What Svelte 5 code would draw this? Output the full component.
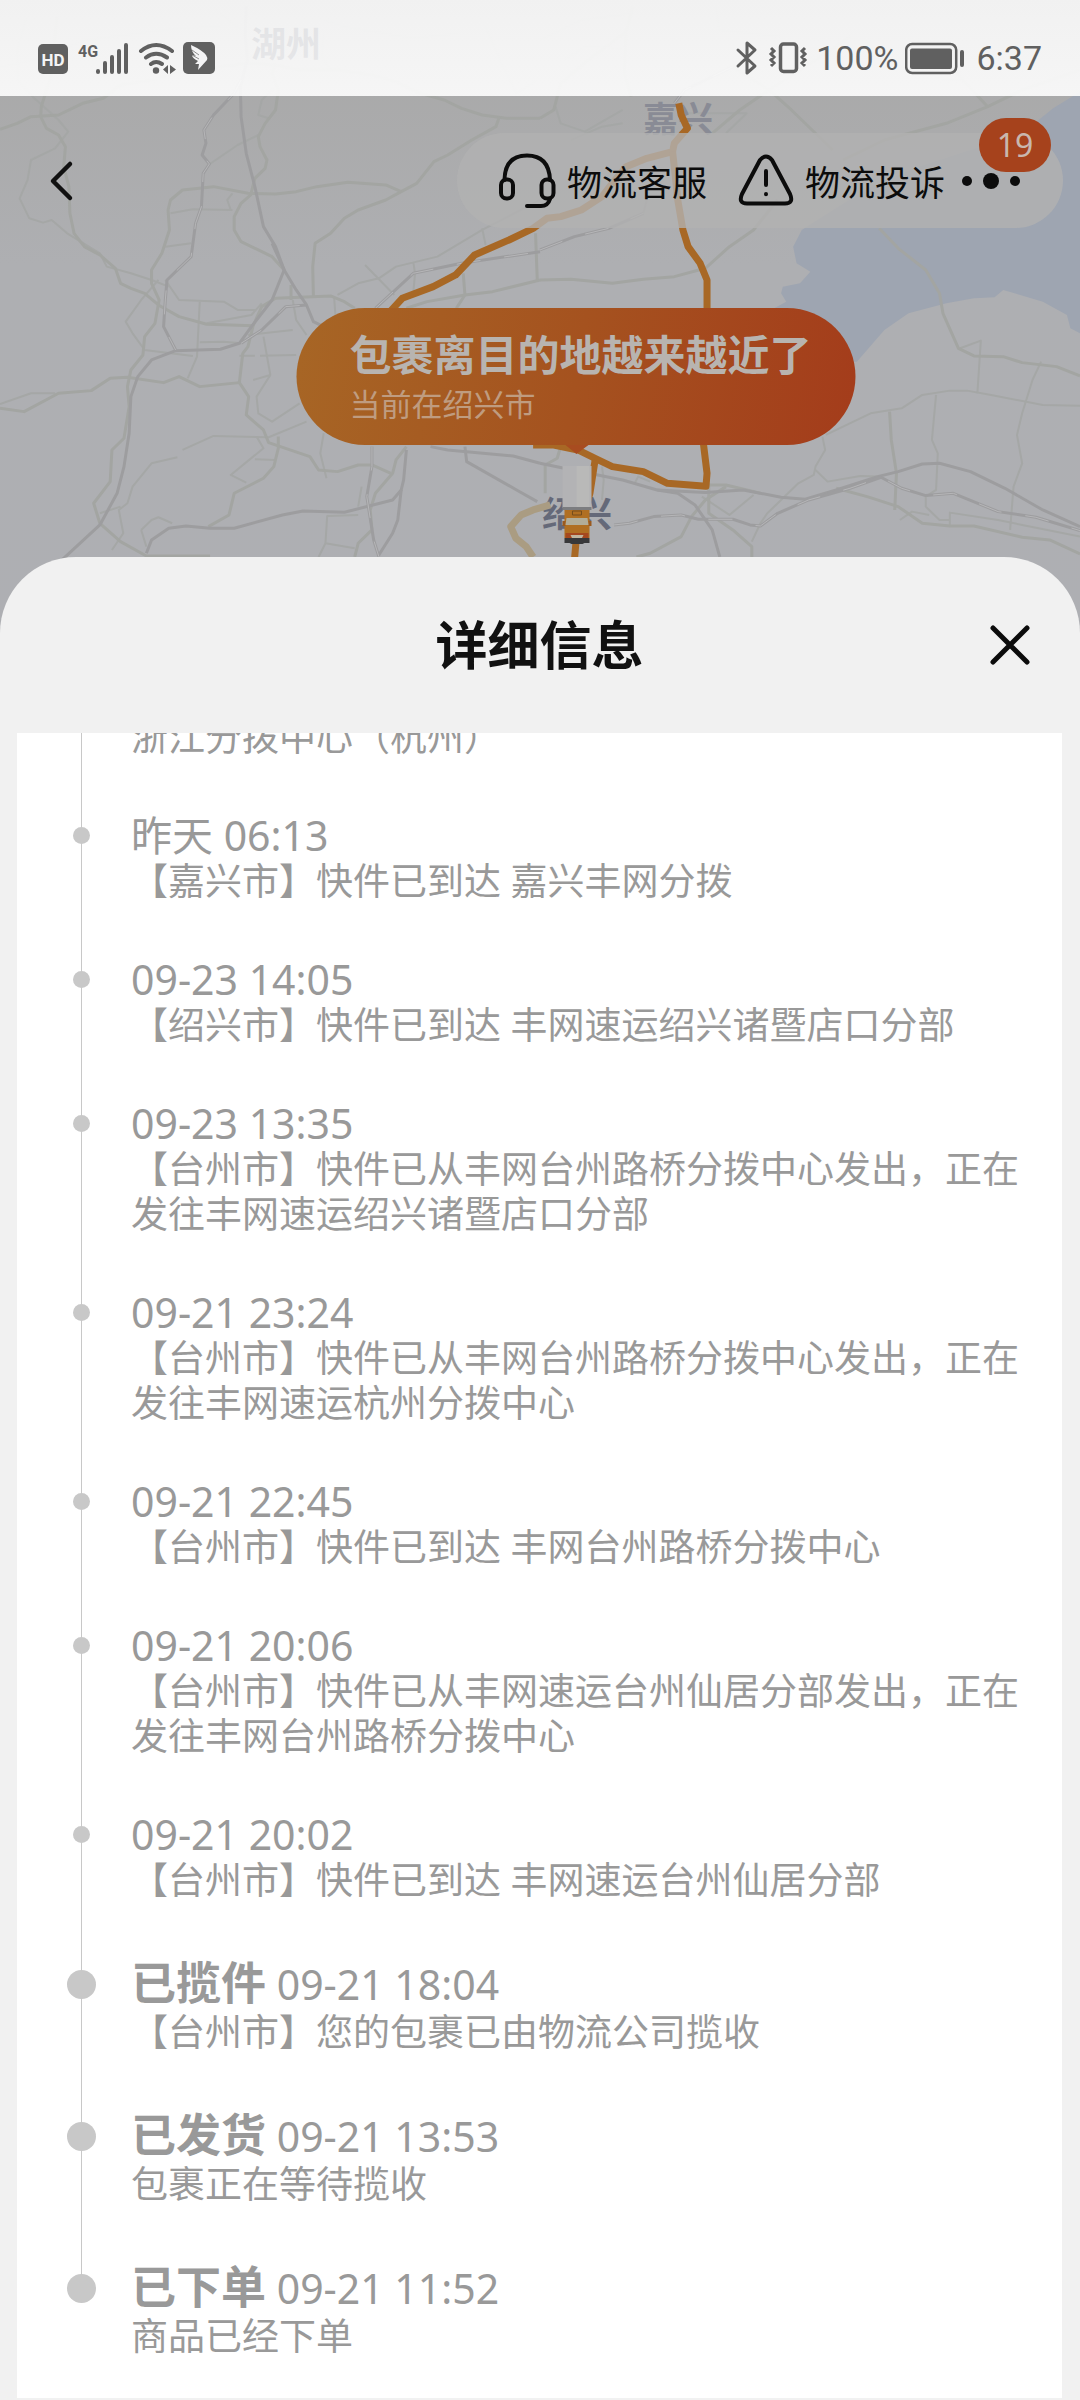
<script>
	const events = [
		{ time: '昨天 06:13', text: '【嘉兴市】快件已到达 嘉兴丰网分拨' },
		{ time: '09-23 14:05', text: '【绍兴市】快件已到达 丰网速运绍兴诸暨店口分部' },
		{ time: '09-23 13:35', text: '【台州市】快件已从丰网台州路桥分拨中心发出，正在发往丰网速运绍兴诸暨店口分部' },
		{ time: '09-21 23:24', text: '【台州市】快件已从丰网台州路桥分拨中心发出，正在发往丰网速运杭州分拨中心' },
		{ time: '09-21 22:45', text: '【台州市】快件已到达 丰网台州路桥分拨中心' },
		{ time: '09-21 20:06', text: '【台州市】快件已从丰网速运台州仙居分部发出，正在发往丰网台州路桥分拨中心' },
		{ time: '09-21 20:02', text: '【台州市】快件已到达 丰网速运台州仙居分部' },
		{ status: '已揽件', time: '09-21 18:04', text: '【台州市】您的包裹已由物流公司揽收' },
		{ status: '已发货', time: '09-21 13:53', text: '包裹正在等待揽收' },
		{ status: '已下单', time: '09-21 11:52', text: '商品已经下单' }
	];

	// map roads, west and east tile
	const west = {
		major: [
			'M0 388 50 370 90 350 170 345 240 310 300 295 350 255 440 240 520 215 640 200 720 190 800 195 870 210 980 210 1080 225 1150 245 1220 280 1290 300 1340 325 1400 345 1470 355 1568 355',
			'M165 50 150 220 120 320 118 350 135 385 170 405 190 440 185 500 200 560 203 640 215 700 245 740 290 765 335 805 350 850 380 865 420 880 460 915 520 950 600 973 735 977',
			'M800 190 790 220 808 270 800 330 770 370 750 410 755 440 775 480 770 505 740 535 728 585 700 610 680 650 680 690 700 725 750 750 790 770 825 810',
			'M1450 350 1440 380 1370 420 1300 465 1260 485 1210 550 1165 575 1120 600 1040 630 1000 655 960 700 915 730 908 800 910 890',
			'M1165 575 1120 555 1010 547 920 560 860 575 800 582 720 580 620 560 530 570 495 600 488 630 492 690 470 760 440 810 440 850 462 900 450 970 420 1010 415 1065 380 1110 370 1160 375 1220 360 1315 325 1350 320 1445 272 1510 290 1570 350 1625 425 1668 610 1668',
			'M0 1225 70 1235 170 1180 265 1172 320 1135 370 1132 475 1148 520 1130 580 1160 695 1148 722 1190 715 1245 765 1290 780 1328 900 1370 925 1410 980 1415 1040 1395 1080 1395 1135 1420',
			'M808 1310 808 1345 795 1400 765 1435 680 1480 665 1545 605 1580',
			'M735 977 720 1040 705 1060 695 1148',
			'M735 977 760 920 800 895 960 888 1000 905 1030 925',
			'M1180 925 1240 905 1350 885 1430 875 1568 840',
			'M1345 820 1350 885 1325 925M1555 700 1560 840M845 855 845 900',
			'M1180 1340 1150 1380 1140 1420 1090 1480 1075 1530 1080 1590 1040 1630 1030 1671'
		],
		highway: [
			'M715 20 712 100 718 180 698 260 700 350 715 460 740 560 765 680 800 740 825 810 860 870 890 915 910 965 950 985',
			'M790 730 825 810 790 900 730 980 695 1030 640 1048 510 1052 440 1080 400 1130 380 1190 375 1300 360 1400 340 1480 290 1575 180 1680',
			'M425 1660 440 1620 490 1585 540 1578 610 1585 680 1585 820 1545 880 1533 1000 1537 1140 1500 1165 1470 1172 1440 1180 1350',
			'M1165 1470 1155 1560 1140 1600 1100 1665',
			'M1250 1340 1300 1350 1490 1368 1568 1390',
			'M1350 1340 1355 1385 1500 1470 1560 1505'
		],
		minor: [
			'M75 60 50 150 52 240 95 290 170 360 198 395 160 445 90 480 80 540 57 595 85 655 125 668 150 660 195 700 290 760 310 800 380 820 440 840 490 860',
			'M495 640 560 628 675 630M675 580 660 600 670 630M605 495 690 435 750 405M780 355 750 345 760 300 795 265M480 740 555 730',
			'M1060 795 1145 885M1400 685 1410 735M1200 785 1205 820 1200 880M980 885 1040 850 1100 835 1150 800 1270 770 1400 690 1568 600',
			'M460 840 410 900 365 965 385 1000 420 1050 560 1068M480 840 520 900 650 905 690 930 740 930 M580 905 572 1070 545 1135',
			'M580 1027 650 1025 700 1030M600 970 730 945 760 910M765 1010 785 1125 745 1190 750 1240 790 1265 870 1210',
			'M530 1350 620 1308 780 1312 890 1265M515 1372 440 1390 385 1460 370 1510 345 1530 358 1600 325 1650M290 1540 350 1520',
			'M745 1310 765 1345 735 1370 670 1425 715 1448M740 1378 800 1380M410 1590 440 1560 460 1552 500 1570M410 1590 425 1640',
			'M1040 1545 950 1548 945 1630 1030 1645M925 1671 945 1630M940 1300 930 1360 948 1435M1050 1460 1040 1520M0 1212 90 1180 160 1180',
			'M850 900 860 960 890 1005M720 1005 850 990M695 1067 740 1067M755 1067 860 1065M785 1125 735 1140M970 890 975 960',
			'M940 100 935 170 960 210M940 60 1000 80 1200 115 1330 100M640 40 700 90M1410 80 1460 200 1500 280 1560 240M0 200 100 180 250 120 520 85 640 80'
		],
		rail: [
			'M700 240 680 280 620 345 592 390 598 430 587 465 608 492 590 520 585 620 568 670 555 770 485 840 480 900 475 980 510 1050',
			'M1090 925 1200 820 1340 790 1568 755',
			'M1080 1340 1080 1400 1065 1490 1085 1620 1100 1670',
			'M700 1030 760 990 830 920 890 915'
		]
	};

	const east = {
		major: [
			'M0 355 40 330 60 250 140 180 250 95 270 20M250 95 245 220 265 290',
			'M0 840 90 838 210 850 300 838 390 830 480 805 550 740 620 690 690 600',
			'M560 200 665 270 730 330 790 390 850 450M500 400 580 330 665 270 800 180 900 110',
			'M1568 210 1400 270 1300 320 1180 370 1000 420 880 480M1200 210 1300 320',
			'M985 685 1040 745 1120 810 1160 880 1170 940 1215 1045 1260 1068 1345 1070 1400 1088 1500 1100 1568 1128',
			'M1015 1235 1020 1320 1035 1420 1030 1530',
			'M860 1465 950 1490 1040 1520 1110 1570 1190 1578 1260 1578 1400 1612 1480 1620 1568 1662',
			'M490 1455 540 1455 640 1480M490 1450 490 1540 560 1590 615 1640 615 1671',
			'M280 1671 320 1660 410 1610 440 1550 480 1500 540 1460M60 1340 50 1375 15 1395 15 1480'
		],
		highway: [
			'M0 1390 70 1405 240 1440 340 1470 400 1480 450 1515 500 1590 522 1671',
			'M340 1470 480 1478 590 1470 700 1492 770 1498 860 1470 980 1430 1040 1415 1110 1392 1160 1390 1250 1415 1350 1465 1460 1530 1568 1580'
		],
		minor: [
			'M830 1305 960 1240 1050 1225 1110 1185 1190 1172 1240 1172 1310 1185 1460 1215 1568 1217',
			'M1150 1185 1138 1320 1155 1360 1150 1470 1120 1490 1120 1520 1160 1560 1190 1560',
			'M1455 1085 1430 1140 1400 1240 1385 1305 1400 1390 1375 1460 1365 1590',
			'M1220 1045 1280 1022 1270 1180M820 1310 828 1350 800 1400 795 1425 750 1450 700 1500 660 1540 640 1570 615 1625',
			'M800 1410 835 1445 930 1428 980 1430M1045 1560 1080 1535 1130 1545M1190 1575 1190 1538 1330 1560 1400 1575 1568 1610',
			'M470 1490 550 1545 620 1485M275 1450 285 1430 320 1445M180 1400 185 1440 180 1500',
			'M45 320 60 370 130 395 240 330M90 420 180 380 240 370M70 180 130 140 240 145M420 340 600 340 540 400',
			'M0 120 120 60 270 40M510 20 520 90 700 110M1060 200 1180 240 1220 240M300 640 310 600'
		],
		rail: [
			'M0 750 100 710 200 685 300 640M390 310 420 270 560 200',
			'M215 1575 260 1570 330 1550 410 1545 460 1558 560 1558 610 1575 640 1578 690 1540 780 1500 900 1465 990 1432 1050 1465 1120 1487 1200 1480 1330 1535 1440 1552 1568 1592'
		]
	};
</script>

<svelte:head>
	<title>详细信息</title>
</svelte:head>

{#snippet roads(tile)}
	{#each tile.minor as d}<path class="road minor" {d} />{/each}
	{#each tile.major as d}<path class="road" {d} />{/each}
	{#each tile.highway as d}<path class="road highway" {d} />{/each}
	{#each tile.rail as d}
		<path class="road rail" {d} />
		<path class="road rail-dash" {d} />
	{/each}
{/snippet}

<main class="page">
	<section class="map-area">
		<svg class="map" viewBox="0 0 1080 660" preserveAspectRatio="xMidYMin slice" aria-hidden="true">
			<defs>
				<linearGradient id="land" x1="0" y1="0" x2="0" y2="1">
					<stop offset="0.1" stop-color="#a9a9a9" />
					<stop offset="0.4" stop-color="#aeafb2" />
					<stop offset="1" stop-color="#aeafb3" />
				</linearGradient>
			</defs>
			<rect width="1080" height="660" fill="url(#land)" />
			<g transform="translate(540 0) scale(.3444 .3333)">
				<path
					fill="#9ea5b1"
					d="M1568 275 1490 325 1400 400 1100 500 960 560 860 625 760 690 735 740 745 790 785 815 755 850 705 860 700 880 715 905 680 925 700 1085H920L1000 990 1070 940 1180 910 1260 895 1320 892 1345 870 1460 905 1530 945 1540 985 1568 1000Z"
				/>
				{@render roads(east)}
			</g>
			<g transform="scale(.3444 .3333)">
				{@render roads(west)}
			</g>
			<g class="labels">
				<text class="faint" x="251" y="57">湖州</text>
				<text x="643" y="132">嘉兴</text>
				<text class="strong" x="542" y="527">绍兴</text>
			</g>
			<g transform="translate(540 0) scale(.3444 .3333)">
				<path class="route old" d="M30 1515-20 1530-55 1545-85 1580-70 1615-40 1640-20 1671" />
				<path
					class="route"
					d="M403 310 410 345 428 385 390 430 385 455 310 475 250 500 210 550 180 590 120 630 60 650 20 655-20 685-90 720-190 765-245 825-310 860-400 895-440 940"
				/>
				<path class="route" d="M385 455 392 520 400 600 415 690 430 740 465 790 485 840 485 940 475 1335 485 1420 482 1459 370 1450 300 1415 210 1400 160 1375 110 1350 40 1335-20 1335" />
				<path class="route" d="M160 1380 145 1480 105 1620 100 1680" />
			</g>
		</svg>

		<div class="overlay">
			<div class="status-bar">
				<div class="status-group">
					<svg width="180" height="36" viewBox="36 40 180 36" role="img" aria-label="HD 4G WiFi">
						<rect x="38" y="44" width="30" height="30" rx="5" fill="#606060" />
						<text class="hd" x="53" y="66" text-anchor="middle">HD</text>
						<text class="net" x="78" y="57">4G</text>
						<path d="M98 71V72M105 63V72M112 57V72M119 51V72M126 45V72" stroke="#606060" stroke-width="4" stroke-linecap="round" />
						<g fill="none" stroke="#606060" stroke-width="4" stroke-linecap="round">
							<path d="M141 51Q156 39 172 51M146 57.500Q156 50 167 57.500M151 64Q156 60 162 64" />
						</g>
						<circle cx="156" cy="70.500" r="3.200" fill="#606060" />
						<path d="M168 65V74L163 69.500ZM170 65V74L176 69.500Z" fill="#606060" />
						<rect x="183" y="42" width="32" height="32" rx="5" fill="#606060" />
						<path d="M191 45Q202 50 206 55Q208 58 207 60L198 70 199 64 195 64 198 61Q192 58 192 55L196 56Q191 52 191 45Z" fill="#f4f4f5" />
						<path d="M192 50 199 55M192 55 199 59" stroke="#606060" stroke-width="0.700" />
					</svg>
				</div>
				<div class="status-group">
					<svg width="74" height="36" viewBox="735 40 74 36" role="img" aria-label="蓝牙 振动">
						<path d="M738 50 755 66 747 73V43L755 50 738 66" fill="none" stroke="#606060" stroke-width="3" stroke-linejoin="round" stroke-linecap="round" />
						<rect x="780.500" y="44" width="16" height="27.500" rx="3" fill="none" stroke="#606060" stroke-width="3.500" />
						<path d="M771 48 774 51 771 54 774 57 771 60 774 63 771 66M805 48 802 51 805 54 802 57 805 60 802 63 805 66" fill="none" stroke="#606060" stroke-width="3" />
					</svg>
					<span>100%</span>
					<svg width="60" height="36" viewBox="905 40 60 36" role="img" aria-label="电池">
						<rect x="906.200" y="44" width="50" height="29" rx="6" fill="none" stroke="#606060" stroke-width="2.500" />
						<rect x="910" y="48.500" width="42" height="20.500" rx="2" fill="#606060" />
						<path d="M962 52V65" stroke="#606060" stroke-width="4" stroke-linecap="round" />
					</svg>
					<span>6:37</span>
				</div>
			</div>

			<div class="nav-bar">
				<button class="back" aria-label="返回">
					<svg width="26" height="42" viewBox="0 0 26 42">
						<path d="M21 4 4 21 21 38" fill="none" stroke="#111" stroke-width="4.500" stroke-linecap="round" stroke-linejoin="round" />
					</svg>
				</button>
				<div class="tools">
					<button class="tool">
						<svg width="58" height="60" viewBox="499 150 58 60" fill="none" stroke="#0c0c0c" stroke-width="4" stroke-linecap="round">
							<path d="M505.500 179Q506 154.500 528 154.500T551 179" />
							<rect x="502" y="178.500" width="12" height="19" rx="5.500" />
							<rect x="542.500" y="178.500" width="12" height="19" rx="5.500" />
							<path d="M551 198Q549 205 542 205H528" />
						</svg>
						物流客服
					</button>
					<button class="tool">
						<svg width="56" height="56" viewBox="738 152 56 56" fill="none" stroke="#0c0c0c" stroke-width="4" stroke-linecap="round">
							<path d="M760 159 742 193Q738 202.500 747 202.500H785Q794 202.500 790 193L772 159Q766 152 760 159Z" stroke-linejoin="round" />
							<path d="M766 170V184M766 193V193.200" />
						</svg>
						物流投诉
					</button>
					<button class="more" aria-label="更多">
						<svg width="60" height="20" viewBox="0 0 60 20" fill="#0c0c0c">
							<circle cx="6" cy="10" r="5" />
							<circle cx="30" cy="10" r="8" />
							<circle cx="54" cy="10" r="5" />
						</svg>
						<span class="badge">19</span>
					</button>
				</div>
			</div>

			<div class="marker">
				<div class="bubble">
					<strong>包裹离目的地越来越近了</strong>
					<span>当前在绍兴市</span>
				</div>
				<svg class="truck" width="36" height="100" viewBox="558 445 36 100" aria-hidden="true">
					<path d="M565 445H588L576 454Z" fill="#a84c20" />
					<path d="M562 466H591V508H562Z" fill="#b3b3b5" />
					<path d="M576 466H589V508H576Z" fill="#b9b9b8" />
					<path d="M562 507H591V510H562Z" fill="#7c7d80" />
					<path d="M564 510H589V538H564Z" fill="#b06f22" />
					<path d="M562 521H565V526H562ZM588 521H591V526H588Z" fill="#9a5a20" />
					<path d="M572 511H581V515H572Z" fill="none" stroke="#754d1d" />
					<path d="M566 518H587L588 525H565Z" fill="#b2ad98" />
					<path d="M565 533H588V538H565Z" fill="#a5481f" />
					<path d="M570 535H583L581 539H572Z" fill="#c0b69f" />
					<path d="M564 538H589V543H584L582 544H571L569 543H564Z" fill="#38383a" />
				</svg>
			</div>
		</div>
	</section>

	<section class="sheet" aria-labelledby="sheet-title">
		<header class="sheet-head">
			<h1 id="sheet-title">详细信息</h1>
			<button class="close" aria-label="关闭">
				<svg width="40" height="40" viewBox="0 0 40 40">
					<path d="M3 3 37 37M37 3 3 37" stroke="#0c0c0c" stroke-width="5" stroke-linecap="round" />
				</svg>
			</button>
		</header>

		<ol class="timeline">
			<li class="event scrolled">
				<p class="desc">浙江分拨中心（杭州）</p>
			</li>
			{#each events as event}
				<li class="event" class:milestone={event.status}>
					<p class="time">
						{#if event.status}<strong>{event.status}</strong>{/if}
						<time>{event.time}</time>
					</p>
					<p class="desc">{event.text}</p>
				</li>
			{/each}
		</ol>
	</section>
</main>

<style>
	:global(body) {
		background: #f1f1f1;
	}

	.page {
		display: flex;
		flex-direction: column;
		min-height: 100vh;
		font-family: 'Noto Sans', 'Noto Sans CJK SC', sans-serif;
	}

	button {
		padding: 0;
		border: none;
		background: none;
		font: inherit;
		color: inherit;
		cursor: pointer;
	}

	svg {
		display: block;
		flex-shrink: 0;
	}

	/* map */
	.map-area {
		display: grid;
	}

	.map,
	.overlay {
		grid-area: 1 / 1;
		width: 100%;
		min-width: 0;
	}

	.map {
		height: 660px;
	}

	.road {
		fill: none;
		stroke: #a3a5a2;
		stroke-width: 3px;
		stroke-linejoin: round;
		vector-effect: non-scaling-stroke;
	}

	.minor {
		stroke: #a5a7a6;
		stroke-width: 2px;
	}

	.highway,
	.rail {
		stroke: #9d9d9f;
	}

	.rail-dash {
		stroke: #b6b6b8;
		stroke-width: 1px;
		stroke-dasharray: 24 24;
	}

	.route {
		fill: none;
		stroke: #a86825;
		stroke-width: 7px;
		stroke-linejoin: round;
		vector-effect: non-scaling-stroke;
	}

	.route.old {
		stroke: #aa9c82;
	}

	.labels {
		font-family: 'Noto Sans CJK SC', sans-serif;
		font-size: 35px;
		font-weight: 700;
		fill: #898b95;
	}

	.faint {
		fill: #2a2e40;
	}

	.strong {
		fill: #656979;
	}

	/* status bar */
	.status-bar {
		display: flex;
		justify-content: space-between;
		box-sizing: border-box;
		height: 96px;
		padding: 20px 38px 0 36px;
		background: linear-gradient(rgba(251, 251, 251, 0.88), rgba(255, 255, 255, 0.89));
		font-family: Roboto, sans-serif;
		font-size: 34px;
		color: #606060;
	}

	.status-group {
		display: flex;
		align-items: center;
		gap: 7px;
	}

	.status-group span:last-child {
		margin-left: 4px;
	}

	.hd {
		font-size: 17px;
		font-weight: 700;
		fill: #f4f4f5;
	}

	.net {
		font-size: 16px;
		font-weight: 700;
		fill: #606060;
	}

	/* nav bar */
	.nav-bar {
		display: flex;
		align-items: center;
		justify-content: space-between;
		padding: 37px 17px 0 49px;
	}

	.tools {
		display: flex;
		align-items: center;
		box-sizing: border-box;
		height: 95px;
		padding: 0 42px 0 41px;
		border-radius: 48px;
		background: rgba(178, 178, 178, 0.8);
	}

	.tool {
		display: flex;
		align-items: center;
		gap: 11px;
		margin-right: 31px;
		font-size: 35px;
		color: #0c0c0c;
		white-space: nowrap;
	}

	.tool + .tool {
		margin-right: 16px;
	}

	.more {
		position: relative;
	}

	.badge {
		position: absolute;
		left: 18px;
		bottom: 19px;
		width: 72px;
		height: 54px;
		border-radius: 27px;
		background: #a6421c;
		font-size: 32px;
		line-height: 54px;
		color: #c9b7ae;
	}

	/* current position */
	.marker {
		position: absolute;
		top: 308px;
		left: calc(50% + 36px);
		display: flex;
		flex-direction: column;
		align-items: center;
		transform: translateX(-50%);
	}

	.bubble {
		display: flex;
		flex-direction: column;
		box-sizing: border-box;
		height: 137px;
		padding: 20px 44px 0 53px;
		border-radius: 69px;
		background: linear-gradient(100deg, #a76625, #a5521f 50%, #a43c1b);
		color: #b8b4b0;
		white-space: nowrap;
	}

	.bubble strong {
		font-size: 42px;
		line-height: 54px;
	}

	.bubble span {
		font-size: 31px;
		line-height: 44px;
		color: #bf9c80;
	}

	/* sheet */
	.sheet {
		position: relative;
		display: flex;
		flex: 1;
		flex-direction: column;
		margin-top: -103px;
		padding: 0 18px 2px 17px;
		border-radius: 76px 76px 0 0;
		background: #f1f1f1;
	}

	.sheet-head {
		display: grid;
		grid-template-columns: 72px 1fr 72px;
		align-items: center;
		height: 176px;
	}

	h1 {
		grid-column: 2;
		margin: 0;
		font-size: 52px;
		line-height: 60px;
		text-align: center;
		color: #111;
	}

	.close {
		justify-self: start;
	}

	/* timeline */
	.timeline {
		flex: 1;
		margin: 0;
		padding: 0 32px 40px 114px;
		overflow: hidden;
		list-style: none;
		background: #fff;
		color: #999;
	}

	.event {
		position: relative;
		padding-bottom: 54px;
	}

	.event:last-child {
		padding-bottom: 0;
	}

	.scrolled {
		margin-top: -19px;
	}

	/* rail between the dots */
	.event::before {
		content: '';
		position: absolute;
		top: 22px;
		bottom: -22px;
		left: -50px;
		width: 1px;
		background: #c8c8c8;
	}

	.scrolled::before {
		top: 0;
	}

	.event:last-child::before {
		display: none;
	}

	.event:not(.scrolled)::after {
		content: '';
		position: absolute;
		top: 14px;
		left: -58px;
		width: 17px;
		height: 17px;
		border-radius: 50%;
		background: #c8c8c8;
	}

	.event.milestone::after {
		left: -64px;
		width: 29px;
		height: 29px;
	}

	.time,
	.desc {
		margin: 0;
	}

	.time {
		font-size: 41px;
		line-height: 45px;
	}

	.milestone .time {
		height: 53px;
		line-height: 53px;
	}

	.time strong {
		font-size: 45px;
	}

	.desc {
		font-size: 37px;
		line-height: 45px;
	}
</style>
